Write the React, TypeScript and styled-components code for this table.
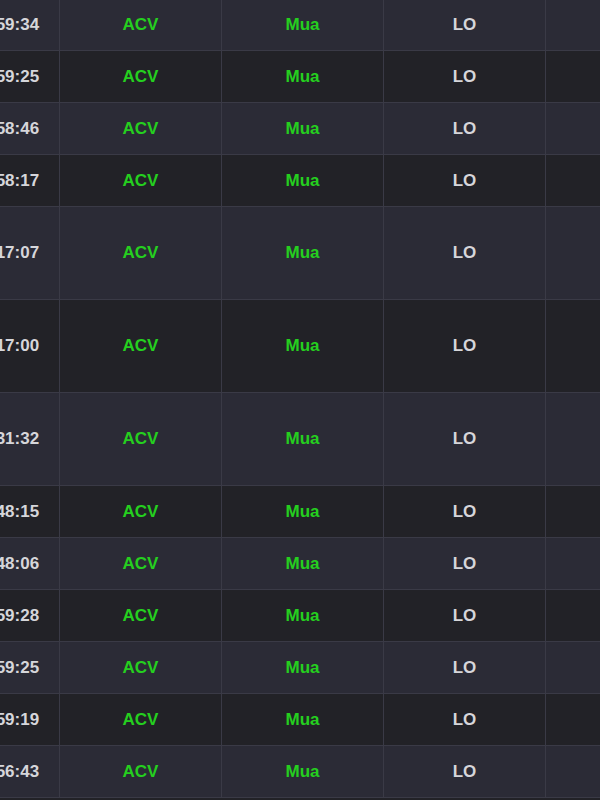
import React from "react";
import styled, {createGlobalStyle} from "styled-components";

const GlobalStyle = createGlobalStyle`
  html, body {
    margin: 0;
    padding: 0;
    background: #222227;
    overflow: hidden;
  }
`;

interface Order {
  time: string;
  symbol: string;
  side: string;
  type: string;
  tall?: boolean;
}

const orders: Order[] = [
  {time: "15/05 09:59:34", symbol: "ACV", side: "Mua", type: "LO"},
  {time: "15/05 09:59:25", symbol: "ACV", side: "Mua", type: "LO"},
  {time: "15/05 09:58:46", symbol: "ACV", side: "Mua", type: "LO"},
  {time: "15/05 09:58:17", symbol: "ACV", side: "Mua", type: "LO"},
  {time: "15/05 09:17:07", symbol: "ACV", side: "Mua", type: "LO", tall: true},
  {time: "15/05 09:17:00", symbol: "ACV", side: "Mua", type: "LO", tall: true},
  {time: "15/05 09:31:32", symbol: "ACV", side: "Mua", type: "LO", tall: true},
  {time: "14/05 14:48:15", symbol: "ACV", side: "Mua", type: "LO"},
  {time: "14/05 14:48:06", symbol: "ACV", side: "Mua", type: "LO"},
  {time: "14/05 13:59:28", symbol: "ACV", side: "Mua", type: "LO"},
  {time: "14/05 13:59:25", symbol: "ACV", side: "Mua", type: "LO"},
  {time: "14/05 13:59:19", symbol: "ACV", side: "Mua", type: "LO"},
  {time: "14/05 13:56:43", symbol: "ACV", side: "Mua", type: "LO"},
];

const Table = styled.div`
  margin-left: -102px;
  margin-top: -1px;
  width: 810px;
  font-family: Arial, "Liberation Sans", sans-serif;
  font-size: 17px;
  font-weight: 700;
`;

const Row = styled.div<{ $odd: boolean; $tall?: boolean }>`
  display: grid;
  grid-template-columns: repeat(5, 162px);
  height: ${({$tall}) => $tall ? 92 : 51}px;
  border-bottom: 1px solid #3a3a46;
  background: ${({$odd}) => $odd ? "#2b2b36" : "#222227"};
`;

const Cell = styled.div<{ $tone?: "green" | "light"; $pad?: number }>`
  display: flex;
  align-items: center;
  justify-content: center;
  padding-left: ${({$pad}) => $pad ?? 0}px;
  border-right: 1px solid #3a3a46;
  white-space: nowrap;
  color: ${({$tone}) => $tone === "green" ? "#25cf1f" : "#d6d6da"};
`;

export default function App() {
  return (
    <>
      <GlobalStyle/>
      <Table>
        {orders.map((o, i) => (
          <Row key={i} $odd={i % 2 === 0} $tall={o.tall}>
            <Cell $pad={6}>{o.time}</Cell>
            <Cell $tone="green">{o.symbol}</Cell>
            <Cell $tone="green">{o.side}</Cell>
            <Cell>{o.type}</Cell>
            <Cell/>
          </Row>
        ))}
      </Table>
    </>
  );
}
